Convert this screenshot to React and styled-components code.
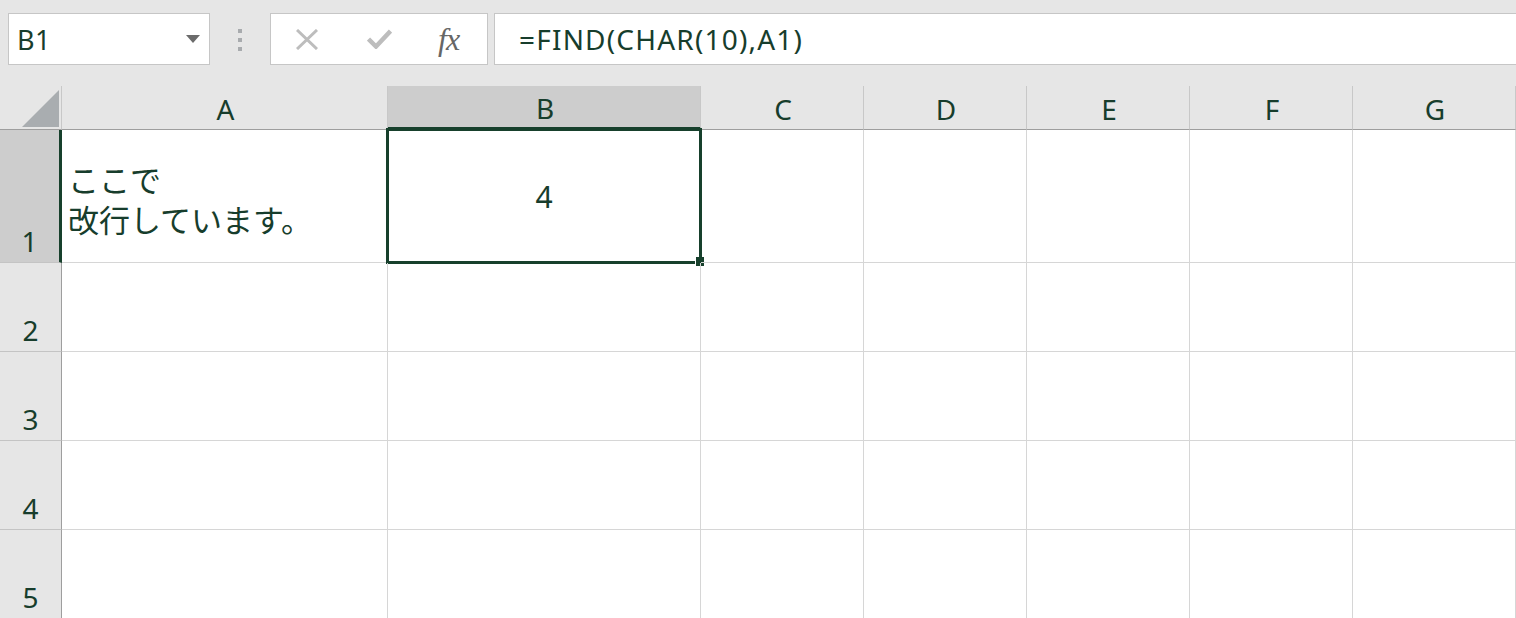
import React from 'react';
import styled, { createGlobalStyle } from 'styled-components';

const GlobalStyle = createGlobalStyle`
  html, body {
    margin: 0;
    padding: 0;
    background: #e6e6e6;
    overflow: hidden;
  }
  * {
    box-sizing: border-box;
  }
`;

const INK = '#173d2c';
const SELECT = '#17402c';
const HEADER_BG = '#e6e6e6';
const HEADER_ACTIVE = '#cdcdcd';
const GRID_LINE = '#d6d6d6';

const columns = [
  { name: 'A', width: 326 },
  { name: 'B', width: 313 },
  { name: 'C', width: 163 },
  { name: 'D', width: 163 },
  { name: 'E', width: 163 },
  { name: 'F', width: 163 },
  { name: 'G', width: 163 },
];

const rows = [
  { name: '1', height: 133 },
  { name: '2', height: 89 },
  { name: '3', height: 89 },
  { name: '4', height: 89 },
  { name: '5', height: 89 },
];

const Page = styled.div`
  width: 1516px;
  height: 618px;
  overflow: hidden;
  background: ${HEADER_BG};
  font-family: 'Noto Sans', 'Noto Sans CJK JP', sans-serif;
  color: ${INK};
`;

const FormulaBar = styled.div`
  display: flex;
  align-items: center;
  height: 86px;
  padding: 13px 0 21px 8px;
`;

const NameBox = styled.div`
  display: flex;
  align-items: center;
  justify-content: space-between;
  width: 202px;
  height: 52px;
  padding: 0 9px 0 8px;
  background: #fff;
  border: 1px solid #c6c6c6;
  font-size: 27px;
  letter-spacing: 0.5px;
`;

const Splitter = styled.div`
  display: flex;
  flex-direction: column;
  gap: 5px;
  margin: 2px 28px 0 28px;

  span {
    width: 4px;
    height: 4px;
    background: #a8abae;
  }
`;

const ButtonBox = styled.div`
  display: flex;
  align-items: center;
  gap: 49px;
  width: 218px;
  height: 52px;
  padding-left: 25px;
  background: #fff;
  border: 1px solid #c6c6c6;
`;

const BarButton = styled.div`
  display: flex;
  align-items: center;
  justify-content: center;
  height: 100%;
`;

const Fx = styled.span`
  font-family: 'Liberation Serif', 'DejaVu Serif', serif;
  font-style: italic;
  font-size: 32px;
  color: #666666;
  letter-spacing: -1px;
  margin-left: -3px;
`;

const FormulaInput = styled.div`
  display: flex;
  align-items: center;
  flex: 1;
  height: 52px;
  margin-left: 6px;
  margin-right: -4px;
  padding-left: 24px;
  background: #fff;
  border: 1px solid #c6c6c6;
  font-size: 28px;
  letter-spacing: 1.2px;
`;

const Sheet = styled.div`
  display: grid;
  grid-template-columns: 62px ${columns.map((c) => `${c.width}px`).join(' ')};
  grid-template-rows: 44px ${rows.map((r) => `${r.height}px`).join(' ')};
  background: #fff;
`;

const Corner = styled.div`
  display: flex;
  align-items: flex-end;
  justify-content: flex-end;
  padding: 0 2px 2px 0;
  background: ${HEADER_BG};
  border-right: 1px solid #c8c8c8;
  border-bottom: 1px solid #9e9e9e;
`;

const ColHeader = styled.div`
  display: flex;
  align-items: center;
  justify-content: center;
  padding: 2px 0 0 2px;
  background: ${(p) => (p.$active ? HEADER_ACTIVE : HEADER_BG)};
  border-right: 1px solid #c8c8c8;
  border-bottom: ${(p) => (p.$active ? `3px solid ${SELECT}` : '1px solid #9e9e9e')};
  font-size: 28px;
`;

const RowHeader = styled.div`
  display: flex;
  align-items: flex-end;
  justify-content: center;
  padding: 0 0 7px 0;
  background: ${(p) => (p.$active ? HEADER_ACTIVE : HEADER_BG)};
  border-right: ${(p) => (p.$active ? `3px solid ${SELECT}` : '1px solid #9e9e9e')};
  border-bottom: 1px solid #c4c4c4;
  font-size: 28px;
  line-height: 28px;
`;

const Cell = styled.div`
  position: relative;
  display: flex;
  align-items: ${(p) => p.$valign || 'flex-end'};
  justify-content: ${(p) => p.$align || 'flex-start'};
  padding: ${(p) => p.$pad || '0 7px'};
  border-right: 1px solid ${GRID_LINE};
  border-bottom: 1px solid ${GRID_LINE};
  font-family: 'Noto Sans CJK JP', 'Noto Sans', sans-serif;
  font-size: 31px;
  line-height: 40px;
  white-space: pre-line;
`;

const Selection = styled.div`
  position: absolute;
  top: -2px;
  left: -2px;
  right: -2px;
  bottom: -2px;
  border: 3px solid ${SELECT};
  pointer-events: none;
`;

const FillHandle = styled.div`
  position: absolute;
  right: -5px;
  bottom: -5px;
  width: 9px;
  height: 9px;
  background: ${SELECT};
  border-left: 1px solid #fff;
`;

const ValueText = styled.span`
  font-family: 'Noto Sans', sans-serif;
  font-size: 30px;
  margin-top: 2px;
`;

const cellData = {
  A1: { text: 'ここで\n改行しています。', pad: '0 6px 23px' },
  B1: { text: '4', number: true },
};

function CancelIcon() {
  return (
    <svg width="22" height="21" viewBox="0 0 22 21">
      <path d="M1 1 L21 20 M21 1 L1 20" stroke="#bdbdbd" strokeWidth="3" fill="none" />
    </svg>
  );
}

function EnterIcon() {
  return (
    <svg width="25" height="20" viewBox="0 0 25 20">
      <path d="M1.5 10 L9 17.5 L23.5 2" stroke="#bdbdbd" strokeWidth="4.5" fill="none" />
    </svg>
  );
}

function DropArrow() {
  return (
    <svg width="14" height="8" viewBox="0 0 14 8">
      <path d="M0 0 H14 L7 8 Z" fill="#6b6b6b" />
    </svg>
  );
}

function SelectAll() {
  return (
    <svg width="37" height="37" viewBox="0 0 37 37">
      <path d="M37 0 V37 H0 Z" fill="#a9adb0" />
    </svg>
  );
}

export default function App() {
  const active = { col: 'B', row: '1' };

  return (
    <Page>
      <GlobalStyle />
      <FormulaBar>
        <NameBox>
          <span>B1</span>
          <DropArrow />
        </NameBox>
        <Splitter>
          <span />
          <span />
          <span />
        </Splitter>
        <ButtonBox>
          <BarButton>
            <CancelIcon />
          </BarButton>
          <BarButton>
            <EnterIcon />
          </BarButton>
          <BarButton>
            <Fx>fx</Fx>
          </BarButton>
        </ButtonBox>
        <FormulaInput>=FIND(CHAR(10),A1)</FormulaInput>
      </FormulaBar>

      <Sheet>
        <Corner>
          <SelectAll />
        </Corner>
        {columns.map((c) => (
          <ColHeader key={c.name} $active={c.name === active.col}>
            {c.name}
          </ColHeader>
        ))}
        {rows.map((r) => (
          <React.Fragment key={r.name}>
            <RowHeader $active={r.name === active.row}>{r.name}</RowHeader>
            {columns.map((c) => {
              const ref = c.name + r.name;
              const data = cellData[ref];
              const selected = c.name === active.col && r.name === active.row;
              return (
                <Cell
                  key={ref}
                  $pad={data?.pad}
                  $align={data?.number ? 'center' : undefined}
                  $valign={data?.number ? 'center' : undefined}
                >
                  {data && (data.number ? <ValueText>{data.text}</ValueText> : data.text)}
                  {selected && (
                    <Selection>
                      <FillHandle />
                    </Selection>
                  )}
                </Cell>
              );
            })}
          </React.Fragment>
        ))}
      </Sheet>
    </Page>
  );
}
